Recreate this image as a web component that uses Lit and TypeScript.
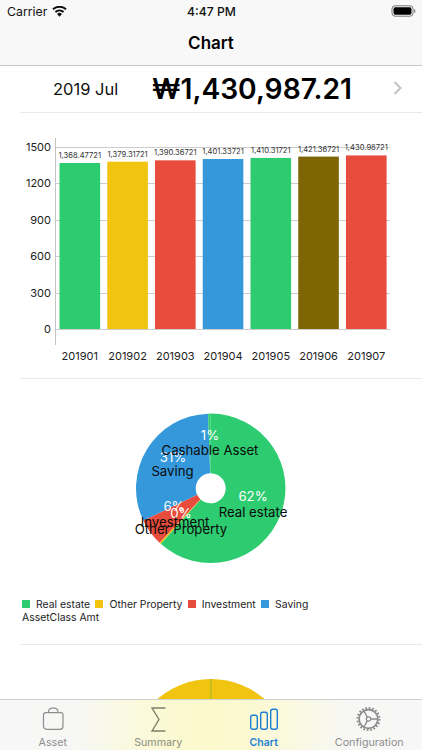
import { LitElement, html, css, svg } from "lit";
import { customElement } from "lit/decorators.js";

const GREEN = "#2ecc71", YELLOW = "#f1c40f", RED = "#e74c3c", BLUE = "#3498db", OLIVE = "#7f6605";

const BARS = [
  { label: "201901", value: 1368.47721, text: "1,368.47721", color: GREEN },
  { label: "201902", value: 1379.31721, text: "1,379.31721", color: YELLOW },
  { label: "201903", value: 1390.36721, text: "1,390.36721", color: RED },
  { label: "201904", value: 1401.33721, text: "1,401.33721", color: BLUE },
  { label: "201905", value: 1410.31721, text: "1,410.31721", color: GREEN },
  { label: "201906", value: 1421.36721, text: "1,421.36721", color: OLIVE },
  { label: "201907", value: 1430.98721, text: "1,430.98721", color: RED },
];

function sector(cx: number, cy: number, r: number, r0: number, a0: number, a1: number) {
  const p = (rad: number, a: number) => {
    const t = ((a - 90) * Math.PI) / 180;
    return `${(cx + rad * Math.cos(t)).toFixed(2)} ${(cy + rad * Math.sin(t)).toFixed(2)}`;
  };
  const large = a1 - a0 > 180 ? 1 : 0;
  return `M${p(r, a0)}A${r} ${r} 0 ${large} 1 ${p(r, a1)}L${p(r0, a1)}A${r0} ${r0} 0 ${large} 0 ${p(r0, a0)}Z`;
}

function barChart() {
  const y0 = 216, scale = 0.1213;
  const ticks = [0, 300, 600, 900, 1200, 1500];
  return html`<svg class="chart" width="422" height="265" viewBox="0 0 422 265">
    ${ticks.map((t) => {
      const y = Math.round(y0 - t * scale) + 0.5;
      return svg`<line x1="55" x2="390" y1=${y} y2=${y} stroke="#cccccc" stroke-width="1"></line>
        <text class="axis" x="51" y=${y + 3} text-anchor="end">${t}</text>`;
    })}
    <line x1="55.5" x2="55.5" y1="25" y2="232" stroke="#c4c4c4" stroke-width="1"></line>
    ${BARS.map((b, i) => {
      const x = 59.5 + i * 47.75;
      const h = b.value * scale;
      return svg`<rect x=${x} y=${y0 - h} width="40.6" height=${h} fill=${b.color}></rect>
        <text class="val" x=${x + 20.3} y=${y0 - h - 5} text-anchor="middle">${b.text}</text>
        <text class="axis" x=${x + 20.3} y="247" text-anchor="middle">${b.label}</text>`;
    })}
  </svg>`;
}

function pieChart() {
  const cx = 210.7, cy = 109.3, r = 74.7, r0 = 15;
  const slices: [number, number, string][] = [
    [0, 222, GREEN],
    [222, 223.2, YELLOW],
    [223.2, 244.5, RED],
    [244.5, 358, BLUE],
    [358, 360, GREEN],
  ];
  return html`<svg class="chart" width="422" height="210" viewBox="0 0 422 210">
    ${slices.map(([a, b, c]) => svg`<path d=${sector(cx, cy, r, r0, a, b)} fill=${c}></path>`)}
    <text class="pct" x="210" y="61" text-anchor="middle">1%</text>
    <text class="pct" x="173" y="83" text-anchor="middle">31%</text>
    <text class="pct" x="174" y="132" text-anchor="middle">6%</text>
    <text class="pct" x="181" y="139" text-anchor="middle">0%</text>
    <text class="pct" x="253" y="122" text-anchor="middle">62%</text>
    <text class="name" x="210" y="76" text-anchor="middle">Cashable Asset</text>
    <text class="name" x="172.5" y="97" text-anchor="middle">Saving</text>
    <text class="name" x="175" y="148" text-anchor="middle">Investment</text>
    <text class="name" x="181" y="155" text-anchor="middle">Other Property</text>
    <text class="name" x="253" y="138" text-anchor="middle">Real estate</text>
  </svg>`;
}

@customElement("app-root")
export class AppRoot extends LitElement {
  static styles = css`
    :host {
      display: block;
      width: 422px;
      height: 750px;
      overflow: hidden;
      position: relative;
      background: #fff;
      font-family: Inter, "Liberation Sans", sans-serif;
      color: #000;
    }
    .top {
      height: 65px;
      background: #f8f8f8;
      border-bottom: 1px solid #c8c8cb;
      display: flex;
      flex-direction: column;
    }
    .status {
      height: 22px;
      display: grid;
      grid-template-columns: 1fr auto 1fr;
      align-items: center;
      padding: 0 6px 0 7px;
      font-size: 12.3px;
      color: #111;
    }
    .carrier { display: flex; align-items: center; gap: 5px; }
    .clock { font-weight: 500; font-size: 12.2px; }
    .batt { justify-self: end; display: flex; }
    .title {
      flex: 1;
      display: flex;
      align-items: center;
      justify-content: center;
      font-size: 17px;
      font-weight: 600;
      padding-bottom: 2px;
    }
    .sep { height: 1px; background: #e9e9e9; margin-left: 20px; }
    .summary {
      height: 46px;
      display: flex;
      align-items: center;
      position: relative;
    }
    .period { width: 99px; margin-left: 53px; font-size: 16.5px; color: #111; flex: none; }
    .amount { font-size: 28.2px; font-weight: 600; flex: none; }
    .chev { position: absolute; right: 20px; top: 15px; }
    .chart { display: block; }
    .chart text { font-family: Inter, "Liberation Sans", sans-serif; }
    .axis { font-size: 11px; fill: #222; }
    .val { font-size: 7.6px; fill: #333; }
    .pct { font-size: 13.2px; fill: #fff; }
    .name { font-size: 13.2px; fill: #0a0a0a; }
    .legend {
      box-sizing: border-box;
      height: 55px;
      padding: 9px 22px 0;
      font-size: 10.4px;
      color: #222;
      display: flex;
      flex-direction: column;
      gap: 1px;
    }
    .items { display: flex; gap: 5.3px; height: 12px; align-items: center; }
    .item { display: flex; align-items: center; gap: 6px; }
    .sw { width: 8px; height: 8px; }
    .bottom-pie { display: block; margin-top: 34px; }
    .tabs {
      position: absolute;
      left: 0;
      right: 0;
      bottom: 0;
      height: 50px;
      border-top: 1px solid #cfcfd0;
      background: linear-gradient(90deg, #f7f7f7 0%, #f7f7f5 18%, #f9f9e2 29%, #fbf9d2 40%, #fcf9cc 50%, #fbf9d2 60%, #f9f9e2 70%, #f7f7f5 82%, #f7f7f7 100%);
      display: grid;
      grid-template-columns: repeat(4, 1fr);
    }
    .tab {
      display: flex;
      flex-direction: column;
      align-items: center;
      font-size: 10.7px;
      color: #8e8e8e;
      padding-top: 7px;
      gap: 1px;
    }
    .tab svg { display: block; }
    .tab.on { color: #1f7fd6; font-weight: 600; font-size: 10.5px; }
    .tab.dim { color: #8c8c7c; }
  `;

  render() {
    return html`
      <div class="top">
        <div class="status">
          <div class="carrier">
            <span>Carrier</span>
            <svg width="15" height="11" viewBox="0 0 15 11">
              <path d="M7.5 10.8 5 8a3.6 3.6 0 0 1 5 0Z" fill="#111"></path>
              <path d="M3.4 6.1a6 6 0 0 1 8.2 0" fill="none" stroke="#111" stroke-width="2"></path>
              <path d="M1 3.3a9.6 9.6 0 0 1 13 0" fill="none" stroke="#111" stroke-width="2"></path>
            </svg>
          </div>
          <div class="clock">4:47 PM</div>
          <div class="batt">
            <svg width="25" height="12" viewBox="0 0 25 12">
              <rect x="1" y="0.8" width="21" height="10.4" rx="3" fill="none" stroke="#777" stroke-width="1"></rect>
              <rect x="2.5" y="2.3" width="18" height="7.4" rx="1.6" fill="#000"></rect>
              <rect x="23" y="4.2" width="1.3" height="3.6" rx="0.6" fill="#888"></rect>
            </svg>
          </div>
        </div>
        <div class="title">Chart</div>
      </div>
      <div class="summary">
        <span class="period">2019 Jul</span>
        <span class="amount">₩1,430,987.21</span>
        <svg class="chev" width="9" height="14" viewBox="0 0 9 14">
          <path d="M1.5 1 7.5 7 1.5 13" fill="none" stroke="#c4c4c7" stroke-width="2"></path>
        </svg>
      </div>
      <div class="sep"></div>
      ${barChart()}
      <div class="sep"></div>
      ${pieChart()}
      <div class="legend">
        <div class="items">
          <span class="item"><i class="sw" style="background:${GREEN}"></i>Real estate</span>
          <span class="item"><i class="sw" style="background:${YELLOW}"></i>Other Property</span>
          <span class="item"><i class="sw" style="background:${RED}"></i>Investment</span>
          <span class="item"><i class="sw" style="background:${BLUE}"></i>Saving</span>
        </div>
        <div>AssetClass Amt</div>
      </div>
      <div class="sep"></div>
      <svg class="bottom-pie" width="422" height="60" viewBox="0 0 422 60">
        <path d=${sector(211, 81.5, 81.5, 15, 0, 180)} fill=${YELLOW}></path>
        <path d=${sector(211, 81.5, 81.5, 15, 180, 360)} fill=${YELLOW}></path>
        <rect x="210.5" y="0" width="1" height="30" fill="#9dbb2a"></rect>
      </svg>
      <div class="tabs">
        <div class="tab">
          <svg width="24" height="28" viewBox="0 0 24 28">
            <path d="M4.5 5.7H20A2 2 0 0 1 22 7.7V19.3A3 3 0 0 1 19 22.3H5.5A3 3 0 0 1 2.5 19.3V7.7A2 2 0 0 1 4.5 5.7Z" fill="none" stroke="#8e8e8e" stroke-width="1.2"></path>
            <path d="M7.5 5.7V4.7A3.5 3.5 0 0 1 11 1.2H13.5A3.5 3.5 0 0 1 17 4.7V5.7" fill="none" stroke="#8e8e8e" stroke-width="1.2"></path>
          </svg>
          <span>Asset</span>
        </div>
        <div class="tab dim">
          <svg width="24" height="28" viewBox="0 0 24 28">
            <path d="M19.5 1H6L13 12.5 6 24H19.5" fill="none" stroke="#80806c" stroke-width="1.4"></path>
          </svg>
          <span>Summary</span>
        </div>
        <div class="tab on">
          <svg width="30" height="28" viewBox="0 0 30 28">
            <rect x="1.7" y="8.3" width="6.6" height="14" rx="2" fill="none" stroke="#1f7fd6" stroke-width="1.4"></rect>
            <rect x="11.7" y="5.3" width="6.6" height="17" rx="2" fill="none" stroke="#1f7fd6" stroke-width="1.4"></rect>
            <rect x="21.7" y="2.3" width="6.6" height="20" rx="2" fill="none" stroke="#1f7fd6" stroke-width="1.4"></rect>
          </svg>
          <span>Chart</span>
        </div>
        <div class="tab">
          <svg width="26" height="28" viewBox="0 0 26 28">
            <circle cx="12.5" cy="12" r="9.4" fill="none" stroke="#8a8a8a" stroke-width="1.6"></circle>
            <circle cx="12.5" cy="12" r="11" fill="none" stroke="#8a8a8a" stroke-width="2" stroke-dasharray="1.7 1.75"></circle>
            <circle cx="12.5" cy="12" r="2.2" fill="none" stroke="#8a8a8a" stroke-width="1.2"></circle>
            <path d="M14.7 12H22M11.4 10.1 7.8 3.9M11.4 13.9 7.8 20.1" fill="none" stroke="#8a8a8a" stroke-width="1.3"></path>
          </svg>
          <span>Configuration</span>
        </div>
      </div>
    `;
  }
}
